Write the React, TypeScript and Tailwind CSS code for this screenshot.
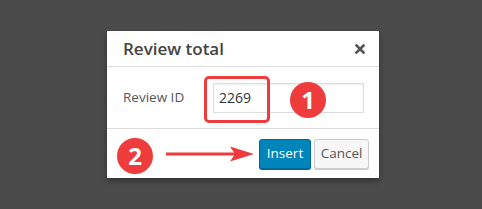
import React from "react";

const font = { fontFamily: '"Open Sans", "Segoe UI", sans-serif' };

function Badge({ n }: { n: string }) {
  return (
    <div className="w-[36px] h-[36px] rounded-full bg-[#ee3b3b] text-white flex items-center justify-center text-[24px] font-bold leading-none">
      {n}
    </div>
  );
}

function App() {
  return (
    <div
      className="w-[482px] h-[209px] bg-[#4b4b4b] pt-[31px] pl-[107px]"
      style={font}
    >
      <div className="relative w-[272px] bg-white shadow-[0_3px_6px_rgba(0,0,0,0.35)]">
        <div className="h-[36px] flex items-center justify-between pl-[16px] pr-[14px] border-b border-[#dddddd]">
          <span className="text-[17px] font-semibold text-[#444444]">Review total</span>
          <svg width="10" height="10" viewBox="0 0 10 10">
            <path d="M1.5 1.5 L8.5 8.5 M8.5 1.5 L1.5 8.5" stroke="#555" strokeWidth="2.6" strokeLinecap="square" />
          </svg>
        </div>
        <div className="h-[61px] flex items-center pl-[16px]">
          <span className="w-[90px] text-[13.5px] text-[#555555]">Review ID</span>
          <div className="w-[151px] h-[30px] border border-[#dddddd] flex items-center pl-[5px] text-[14px] text-[#333333] shadow-[inset_0_1px_2px_rgba(0,0,0,0.07)]">
            2269
          </div>
        </div>
        <div className="h-[50px] border-t border-[#dddddd] flex items-center justify-end gap-[3px] pr-[10px]">
          <button className="h-[30px] w-[52px] rounded-[3px] bg-[#0085ba] border border-[#006799] text-white text-[13.5px] shadow-[0_1px_0_#006799]">
            Insert
          </button>
          <button className="h-[30px] w-[55px] rounded-[3px] bg-[#f7f7f7] border border-[#cccccc] text-[#555555] text-[13.5px] shadow-[0_1px_0_#cccccc]">
            Cancel
          </button>
        </div>

        <div className="absolute left-[97px] top-[45px] w-[66px] h-[47px] border-[3px] border-[#ee3b3b] rounded-[5px]" />
        <div className="absolute left-[183px] top-[51px]">
          <Badge n="1" />
        </div>
        <div className="absolute left-[10px] top-[107px]">
          <Badge n="2" />
        </div>
        <svg className="absolute left-[59px] top-[115px]" width="90" height="16" viewBox="0 0 90 16">
          <path d="M0 8 H72" stroke="#ee3b3b" strokeWidth="3" />
          <path d="M64 0.5 L88 8 L64 15.5 L69 8 Z" fill="#ee3b3b" />
        </svg>
      </div>
    </div>
  );
}

export default App;
